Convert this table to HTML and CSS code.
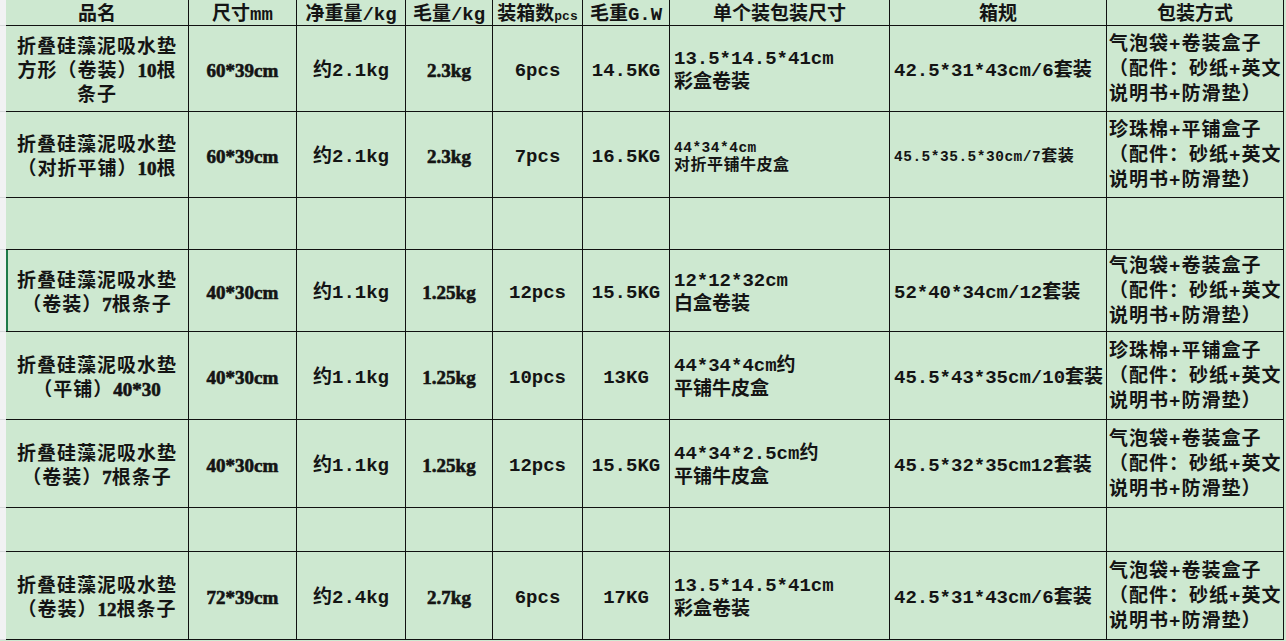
FILE: index.html
```html
<!DOCTYPE html>
<html lang="zh">
<head>
<meta charset="utf-8">
<title>折叠硅藻泥吸水垫 包装规格</title>
<link rel="stylesheet" href="styles.css">
</head>
<body>
<div class="sheet">
  <div class="strip"></div>
  <div class="c hd">品名</div>
  <div class="c hd">尺寸mm</div>
  <div class="c hd">净重量/kg</div>
  <div class="c hd">毛量/kg</div>
  <div class="c hd"><div>装箱数<span class="pcs">pcs</span></div></div>
  <div class="c hd">毛重G.W</div>
  <div class="c hd">单个装包装尺寸</div>
  <div class="c hd">箱规</div>
  <div class="c hd">包装方式</div>

  <div class="strip"></div>
  <div class="c name"><div>折叠硅藻泥吸水垫<br>方形（卷装）<span class="num">10</span>根<br>条子</div></div>
  <div class="c ser">60*39cm</div>
  <div class="c">约2.1kg</div>
  <div class="c ser">2.3kg</div>
  <div class="c">6pcs</div>
  <div class="c">14.5KG</div>
  <div class="c left"><div>13.5*14.5*41cm<br>彩盒卷装</div></div>
  <div class="c left">42.5*31*43cm/6套装</div>
  <div class="c left pack"><div>气泡袋+卷装盒子<br>（配件：砂纸+英文<br>说明书+防滑垫）</div></div>

  <div class="strip"></div>
  <div class="c name"><div>折叠硅藻泥吸水垫<br>（对折平铺）<span class="num">10</span>根</div></div>
  <div class="c ser">60*39cm</div>
  <div class="c">约2.1kg</div>
  <div class="c ser">2.3kg</div>
  <div class="c">7pcs</div>
  <div class="c">16.5KG</div>
  <div class="c left small"><div><span class="lat">44*34*4cm</span><br>对折平铺牛皮盒</div></div>
  <div class="c left small"><div><span class="lat">45.5*35.5*30cm/7</span>套装</div></div>
  <div class="c left pack"><div>珍珠棉+平铺盒子<br>（配件：砂纸+英文<br>说明书+防滑垫）</div></div>

  <div class="strip"></div>
  <div class="c"></div>
  <div class="c"></div>
  <div class="c"></div>
  <div class="c"></div>
  <div class="c"></div>
  <div class="c"></div>
  <div class="c"></div>
  <div class="c"></div>
  <div class="c"></div>

  <div class="strip"></div>
  <div class="c name sel"><div>折叠硅藻泥吸水垫<br>（卷装）<span class="num">7</span>根条子</div></div>
  <div class="c ser">40*30cm</div>
  <div class="c">约1.1kg</div>
  <div class="c ser">1.25kg</div>
  <div class="c">12pcs</div>
  <div class="c">15.5KG</div>
  <div class="c left"><div>12*12*32cm<br>白盒卷装</div></div>
  <div class="c left">52*40*34cm/12套装</div>
  <div class="c left pack"><div>气泡袋+卷装盒子<br>（配件：砂纸+英文<br>说明书+防滑垫）</div></div>

  <div class="strip"></div>
  <div class="c name"><div>折叠硅藻泥吸水垫<br>（平铺）<span class="num">40*30</span></div></div>
  <div class="c ser">40*30cm</div>
  <div class="c">约1.1kg</div>
  <div class="c ser">1.25kg</div>
  <div class="c">10pcs</div>
  <div class="c">13KG</div>
  <div class="c left"><div>44*34*4cm约<br>平铺牛皮盒</div></div>
  <div class="c left">45.5*43*35cm/10套装</div>
  <div class="c left pack"><div>珍珠棉+平铺盒子<br>（配件：砂纸+英文<br>说明书+防滑垫）</div></div>

  <div class="strip"></div>
  <div class="c name"><div>折叠硅藻泥吸水垫<br>（卷装）<span class="num">7</span>根条子</div></div>
  <div class="c ser">40*30cm</div>
  <div class="c">约1.1kg</div>
  <div class="c ser">1.25kg</div>
  <div class="c">12pcs</div>
  <div class="c">15.5KG</div>
  <div class="c left"><div>44*34*2.5cm约<br>平铺牛皮盒</div></div>
  <div class="c left">45.5*32*35cm12套装</div>
  <div class="c left pack"><div>气泡袋+卷装盒子<br>（配件：砂纸+英文<br>说明书+防滑垫）</div></div>

  <div class="strip"></div>
  <div class="c"></div>
  <div class="c"></div>
  <div class="c"></div>
  <div class="c"></div>
  <div class="c"></div>
  <div class="c"></div>
  <div class="c"></div>
  <div class="c"></div>
  <div class="c"></div>

  <div class="strip"></div>
  <div class="c name"><div>折叠硅藻泥吸水垫<br>（卷装）<span class="num">12</span>根条子</div></div>
  <div class="c ser">72*39cm</div>
  <div class="c">约2.4kg</div>
  <div class="c ser">2.7kg</div>
  <div class="c">6pcs</div>
  <div class="c">17KG</div>
  <div class="c left"><div>13.5*14.5*41cm<br>彩盒卷装</div></div>
  <div class="c left">42.5*31*43cm/6套装</div>
  <div class="c left pack"><div>气泡袋+卷装盒子<br>（配件：砂纸+英文<br>说明书+防滑垫）</div></div>
</div>
</body>
</html>
```
FILE: styles.css
```css
html, body {
  margin: 0;
  padding: 0;
  background: #cde8d0;
  overflow: hidden;
}

.sheet {
  width: 1286px;
  height: 641px;
  background: #cde8d0;
  display: grid;
  grid-template-columns: 6px 183px 108px 109px 87px 90px 87px 220px 217px 177px;
  grid-template-rows: 26px 86px 86px 52px 82px 88px 88px 44px 88px;
  align-content: start;
  color: #141414;
  font-family: "Liberation Mono", "Noto Sans CJK SC", monospace;
  font-weight: 700;
  font-size: 19px;
}

.strip {
  background: #f1f2f3;
  border-bottom: 1px solid #d6d8da;
}

.c {
  box-sizing: border-box;
  border-right: 1px solid #111;
  border-bottom: 1px solid #111;
  display: flex;
  align-items: center;
  justify-content: center;
  text-align: center;
  line-height: 24px;
  padding-top: 4px;
  white-space: nowrap;
  overflow: hidden;
}

.hd {
  align-items: flex-start;
  padding-top: 5px;
  line-height: 20px;
}

.pcs {
  font-size: 13px;
}

.name {
  font-family: "Liberation Serif", "Noto Sans CJK SC", serif;
  letter-spacing: 1px;
}

.ser,
.num {
  font-family: "Liberation Serif", "Noto Sans CJK SC", serif;
  -webkit-text-stroke: 0.6px #141414;
}

.num {
  letter-spacing: 0;
}

.left {
  justify-content: flex-start;
  text-align: left;
  padding-left: 4px;
}

.pack {
  padding-left: 2px;
  letter-spacing: 1px;
  line-height: 25px;
}

.small {
  font-size: 16px;
  letter-spacing: 0.5px;
  line-height: 18px;
}

.small .lat {
  font-size: 14.5px;
}

.sel {
  box-shadow: inset 2px 0 0 #1f7a4a;
}
```
